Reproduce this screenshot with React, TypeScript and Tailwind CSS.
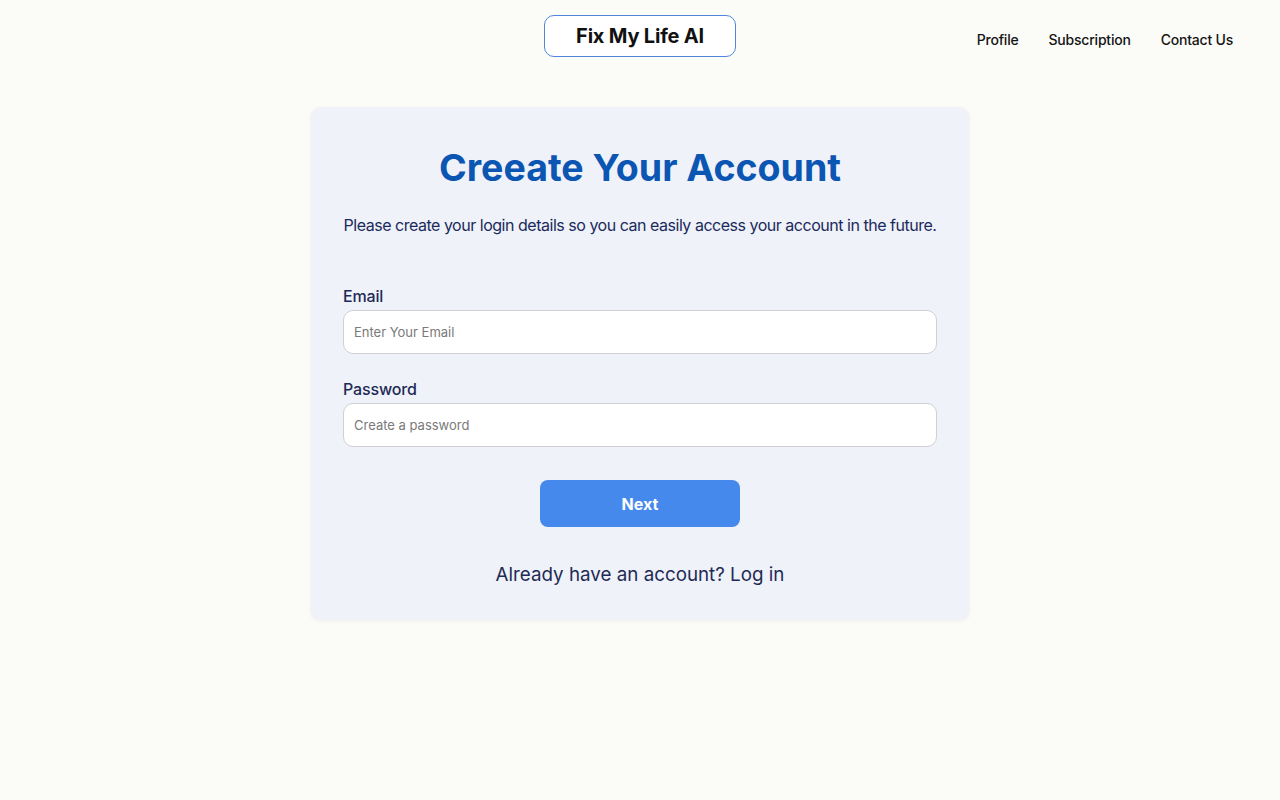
export default function App() {
  return (
    <div className="min-h-screen bg-[#fbfbf7] font-['Inter','Open_Sans',sans-serif]">
      {/* Header */}
      <header className="grid grid-cols-[1fr_auto_1fr] items-start px-[47px] pt-[15px]">
        <div />
        <div className="flex h-[42px] w-[192px] items-center justify-center rounded-[10px] border border-[#4f86d9] bg-white">
          <span className="text-[20px] font-bold tracking-[-0.01em] text-[#111111]">Fix My Life AI</span>
        </div>
        <nav className="flex items-center justify-end gap-[30px] pt-[14px] text-[14px] font-medium tracking-[-0.015em] text-[#141414]">
          <a>Profile</a>
          <a>Subscription</a>
          <a>Contact Us</a>
        </nav>
      </header>

      {/* Card */}
      <main className="flex justify-center pt-[50px]">
        <div className="w-[658px] rounded-[10px] bg-[#eff2f8] px-8 pb-[31px] pt-[37px] shadow-[0_1px_4px_rgba(0,0,0,0.06)]">
          <h1 className="text-center text-[37.5px] font-bold leading-[48px] text-[#0b55b3]">
            Creeate Your Account
          </h1>
          <p className="mt-[21px] whitespace-nowrap text-center text-[16px] leading-6 tracking-[-0.03em] text-[#1b2a5c]">
            Please create your login details so you can easily access your account in the future.
          </p>

          <div className="mt-[47px] flex flex-col">
            <label className="text-[16px] font-medium leading-6 tracking-[-0.01em] text-[#1e2a55]">Email</label>
            <input
              type="email"
              placeholder="Enter Your Email"
              className="mt-[2px] h-[44px] w-full rounded-[10px] border border-[#cfcfd4] bg-white px-[10px] text-[13px] text-[#222] outline-none placeholder:text-[#7a7a7a]"
            />
            <label className="mt-[23px] text-[16px] font-medium leading-6 tracking-[-0.01em] text-[#1e2a55]">Password</label>
            <input
              type="password"
              placeholder="Create a password"
              className="mt-[2px] h-[44px] w-full rounded-[10px] border border-[#cfcfd4] bg-white px-[10px] text-[13px] text-[#222] outline-none placeholder:text-[#7a7a7a]"
            />
          </div>

          <div className="mt-[33px] flex justify-center">
            <button className="h-[47px] w-[200px] rounded-[8px] bg-[#4689ec] text-[16px] font-bold text-white">
              Next
            </button>
          </div>

          <p className="mt-[34px] text-center text-[18.8px] leading-[28px] text-[#1e2a55]">
            Already have an account? Log in
          </p>
        </div>
      </main>
    </div>
  );
}
